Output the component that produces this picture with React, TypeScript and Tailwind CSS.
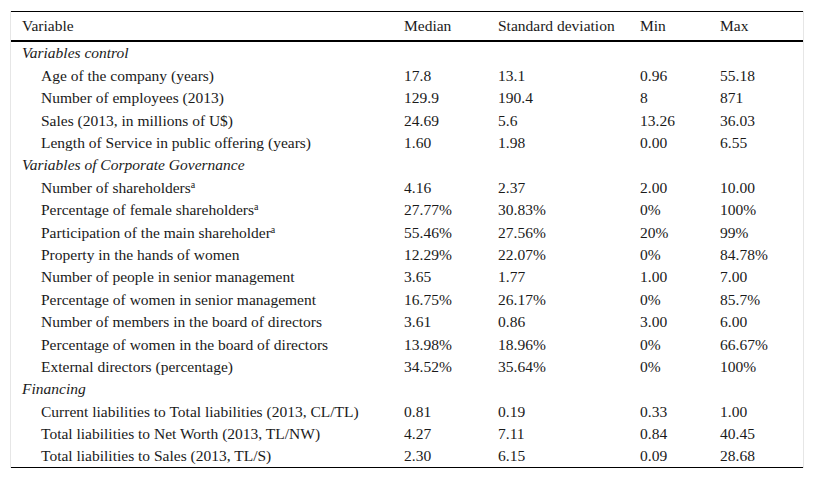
const cols = 'grid grid-cols-[393px_94px_142px_80px_1fr]'

type Row =
  | { section: string }
  | { label: string; sup?: boolean; v: [string, string, string, string] }

const rows: Row[] = [
  { section: 'Variables control' },
  { label: 'Age of the company (years)', v: ['17.8', '13.1', '0.96', '55.18'] },
  { label: 'Number of employees (2013)', v: ['129.9', '190.4', '8', '871'] },
  { label: 'Sales (2013, in millions of U$)', v: ['24.69', '5.6', '13.26', '36.03'] },
  { label: 'Length of Service in public offering (years)', v: ['1.60', '1.98', '0.00', '6.55'] },
  { section: 'Variables of Corporate Governance' },
  { label: 'Number of shareholders', sup: true, v: ['4.16', '2.37', '2.00', '10.00'] },
  { label: 'Percentage of female shareholders', sup: true, v: ['27.77%', '30.83%', '0%', '100%'] },
  { label: 'Participation of the main shareholder', sup: true, v: ['55.46%', '27.56%', '20%', '99%'] },
  { label: 'Property in the hands of women', v: ['12.29%', '22.07%', '0%', '84.78%'] },
  { label: 'Number of people in senior management', v: ['3.65', '1.77', '1.00', '7.00'] },
  { label: 'Percentage of women in senior management', v: ['16.75%', '26.17%', '0%', '85.7%'] },
  { label: 'Number of members in the board of directors', v: ['3.61', '0.86', '3.00', '6.00'] },
  { label: 'Percentage of women in the board of directors', v: ['13.98%', '18.96%', '0%', '66.67%'] },
  { label: 'External directors (percentage)', v: ['34.52%', '35.64%', '0%', '100%'] },
  { section: 'Financing' },
  { label: 'Current liabilities to Total liabilities (2013, CL/TL)', v: ['0.81', '0.19', '0.33', '1.00'] },
  { label: 'Total liabilities to Net Worth (2013, TL/NW)', v: ['4.27', '7.11', '0.84', '40.45'] },
  { label: 'Total liabilities to Sales (2013, TL/S)', v: ['2.30', '6.15', '0.09', '28.68'] },
]

export default function App() {
  return (
    <div className="w-[814px] h-[483px] bg-white pt-[11px] pl-[10px] font-['Liberation_Serif',serif] text-[15.5px] leading-none text-[#1a1a1a]">
      <div className="w-[794px] border-x border-[#e6e6e6]">
        <div className="border-t border-black">
          <div className={`${cols} h-[30px] items-center border-b-2 border-black`}>
            <div className="pl-[11px]">Variable</div>
            <div>Median</div>
            <div>Standard deviation</div>
            <div>Min</div>
            <div>Max</div>
          </div>
          <div className="border-b border-black">
            {rows.map((r, i) =>
              'section' in r ? (
                <div key={i} className="h-[22.4px] flex items-center pl-[11px] italic">
                  {r.section}
                </div>
              ) : (
                <div key={i} className={`${cols} h-[22.4px] items-center`}>
                  <div className="pl-[30px]">
                    {r.label}
                    {r.sup && <sup className="text-[10px]">a</sup>}
                  </div>
                  {r.v.map((x, j) => (
                    <div key={j}>{x}</div>
                  ))}
                </div>
              )
            )}
          </div>
        </div>
      </div>
    </div>
  )
}
